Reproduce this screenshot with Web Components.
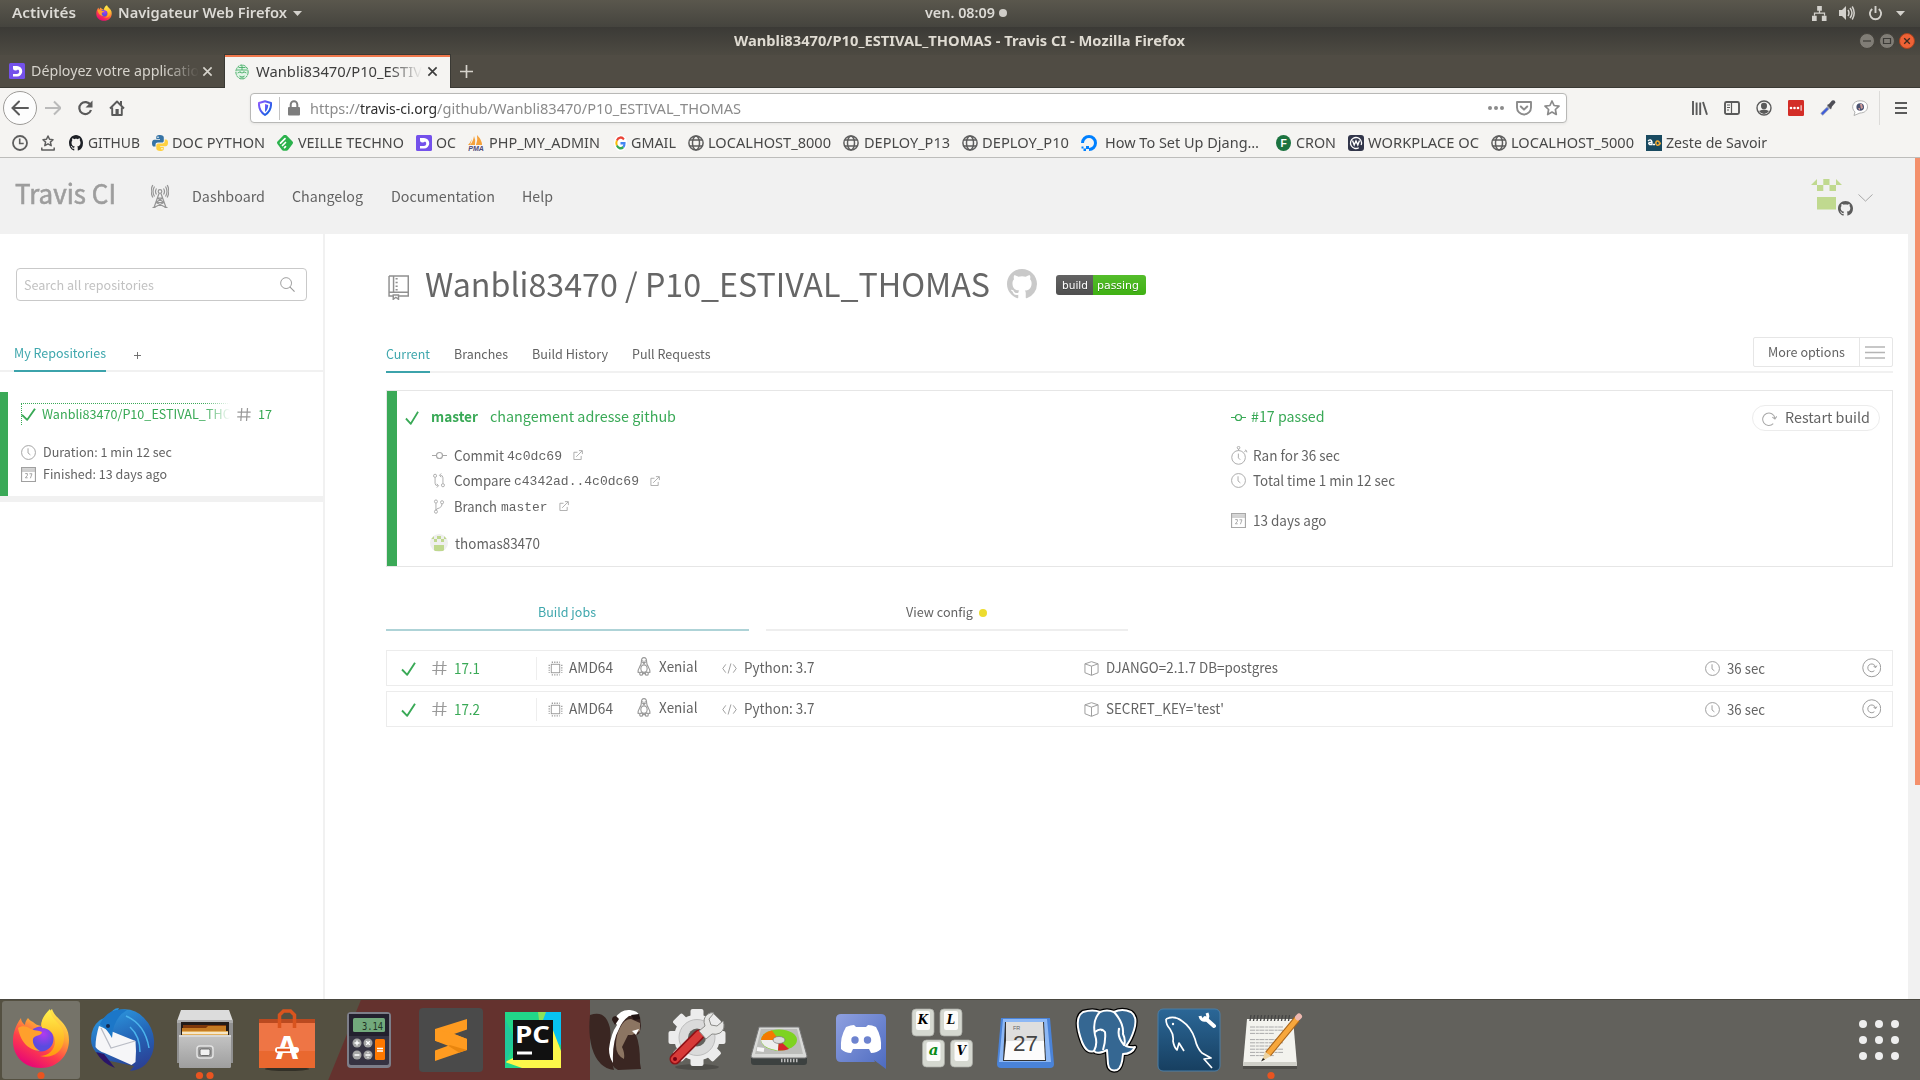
<!DOCTYPE html>
<html lang="fr">
<head>
<meta charset="utf-8">
<title>Travis CI</title>
<style>
html,body{margin:0;padding:0;width:1920px;height:1080px;overflow:hidden;background:#fff}
</style>
</head>
<body>
<desktop-screen></desktop-screen>
<script>
const OCTO='<path d="M8 0C3.58 0 0 3.58 0 8c0 3.54 2.29 6.53 5.47 7.59.4.07.55-.17.55-.38 0-.19-.01-.82-.01-1.49-2.01.37-2.53-.49-2.69-.94-.09-.23-.48-.94-.82-1.13-.28-.15-.68-.52-.01-.53.63-.01 1.08.58 1.23.82.72 1.21 1.87.87 2.33.66.07-.52.28-.87.51-1.07-1.78-.2-3.64-.89-3.64-3.95 0-.87.31-1.59.82-2.15-.08-.2-.36-1.02.08-2.12 0 0 .67-.21 2.2.82.64-.18 1.32-.27 2-.27s1.36.09 2 .27c1.53-1.04 2.2-.82 2.2-.82.44 1.1.16 1.92.08 2.12.51.56.82 1.27.82 2.15 0 3.07-1.87 3.75-3.65 3.95.29.25.54.73.54 1.48 0 1.07-.01 1.93-.01 2.2 0 .21.15.46.55.38A8.01 8.01 0 0016 8c0-4.42-3.58-8-8-8z"/>';
const FOX=`<defs><linearGradient id="fa" x1=".8" y1="0" x2=".25" y2="1"><stop offset="0" stop-color="#fff44f"/><stop offset=".35" stop-color="#ffa436"/><stop offset=".65" stop-color="#ff3f4a"/><stop offset="1" stop-color="#e4007c"/></linearGradient><radialGradient id="fb" cx=".6" cy=".3"><stop offset="0" stop-color="#b13af0"/><stop offset="1" stop-color="#5b4be0"/></radialGradient><linearGradient id="fc" x1="0" y1="0" x2="0" y2="1"><stop offset="0" stop-color="#fff44f"/><stop offset="1" stop-color="#ff980e"/></linearGradient></defs>`;
/* name: [viewBox, markup]; stroke icons inherit currentColor */
const S='fill="none" stroke="currentColor"';
const ICONS={
fox:['12 9 58 61',FOX+`<path fill="url(#fa)" d="M21 19C15 27 13 35 13 42c0 16 12 27 28 27s28-12 28-28c0-11-5-16-9-20-3-3-7-7-8-11-6 5-11 11-11 17-4-1-6-2-8-4-3-1-4-3-5-4-2 2-3 5-3 7-3-2-4-5-4-7z"/><circle cx="41" cy="40" r="12.500" fill="url(#fb)"/><path fill="url(#fc)" d="M50 10c-6 6-10 12-8 19 7 0 13 6 13 13 0 9-7 15-15 15 11 3 23-3 24-17 1-9-4-14-8-18-3-3-6-7-6-12z"/><path fill="#ffa02c" d="M18 29c4-3 9-2 13 1 3 2 8 1 11 3 0 4-8 3-9 7-1 5 3 10 7 12-10-1-19-7-22-23z"/>`],
down:['0 0 8 5','<path fill="#d3d1cc" d="M0 0h8L4 5z"/>'],
net:['0 0 16 16','<g fill="#d3d1cc"><path d="M5.500 0h5v5h-5zM0 10.500h5V16H0zM10.500 10.500h5V16h-5zM2 7h12v3h-1.300V8.300H3.300V10H2zM7.300 4h1.400v4H7.300z"/></g>'],
vol:['0 0 16 16','<path fill="#d3d1cc" d="M0 5h3l4-4v14l-4-4H0z"/><path fill="none" stroke="#d3d1cc" stroke-width="1.500" d="M9 5q2 3 0 6M11 3q4 5 0 10M13.200 1.500q4 6.500 0 13"/>'],
power:['0 0 16 16','<path fill="none" stroke="#d3d1cc" stroke-width="2" d="M4.500 3.200a6 6 0 1 0 7 0M8 0v7.500"/>'],
min:['0 0 16 16','<circle cx="8" cy="8" r="7.500" fill="#807d76" stroke="#45433c"/><path stroke="#3c3b37" stroke-width="1.200" d="M4 8h8"/>'],
max:['0 0 16 16','<circle cx="8" cy="8" r="7.500" fill="#807d76" stroke="#45433c"/><path stroke="#3c3b37" fill="none" stroke-width="1.200" d="M4.500 5.500h7v5h-7z"/>'],
cls:['0 0 16 16','<circle cx="8" cy="8" r="7.500" fill="#ef6236" stroke="#a8431f"/><path stroke="#3c2b20" stroke-width="1.300" d="M5.200 5.200l5.600 5.600M10.800 5.200l-5.600 5.600"/>'],
oc:['0 0 16 16','<rect width="16" height="16" rx="1.500" fill="#7451eb"/><path fill="#fff" d="M4 3h4a5 5 0 0 1 0 10.500H4V11h4a2.400 2.400 0 0 0 1-4.500Q8 7.500 6.500 7.500 4 7.500 4 5z"/>'],
travis:['0 0 16 16','<g fill="none" stroke="#3eaa5f" stroke-width="1"><circle cx="8" cy="8" r="7" fill="#e3f4e8" stroke-dasharray="3 .8"/><path stroke-width=".9" d="M2 6h12M4 3.500h8M3 9q2.500-2 5 0 2.500-2 5 0M5 12q3 2 6 0M8 1v5M5.500 8h1M9.500 8h1M6 14h4"/></g>'],
x:['0 0 12 12','<path '+S+' stroke-width="1.800" d="M1.500 1.500l9 9M10.500 1.500l-9 9"/>'],
plus:['0 0 14 14','<path '+S+' stroke-width="1.800" d="M7 0v14M0 7h14"/>'],
back:['0 0 36 36','<circle cx="18" cy="18" r="16.500" fill="#fdfdfd" stroke="#9d9b98"/><path '+S+' stroke-width="2" d="M26 18H11M17 11.500L10.500 18l6.500 6.500" stroke-linecap="round"/>'],
fwd:['0 0 16 16','<path '+S+' stroke-width="2" d="M0 8h15M9 1.500L15.500 8 9 14.500"/>'],
reload:['0 0 16 16','<path '+S+' stroke-width="2.200" d="M13.500 5a6 6 0 1 0 .5 5"/><path fill="currentColor" d="M15.500.500V7.500h-7z"/>'],
home:['0 0 16 16','<path '+S+' stroke-width="1.900" stroke-linejoin="round" d="M1 8.500L8 1.500l7 7M3.200 7.500V15h9.600V7.500"/><path fill="currentColor" d="M6.500 9h3.200v6H6.500zM11 1h2v4h-2z"/>'],
shield:['0 0 14 16','<defs><linearGradient id="sh" x2="1" y2="1"><stop offset="0" stop-color="#9059ff"/><stop offset="1" stop-color="#0060df"/></linearGradient></defs><path fill="none" stroke="url(#sh)" stroke-width="2" stroke-linejoin="round" d="M7 1.200L13 3q.5 8-6 12Q.5 11 1 3z"/><path fill="url(#sh)" d="M7 4l3.200 1q0 4.500-3.200 7z"/>'],
lock:['0 0 14 16','<rect x="1" y="7" width="12" height="8.500" rx="1" fill="#7d7d7d"/><path fill="none" stroke="#7d7d7d" stroke-width="2" d="M3.700 8V4.500a3.300 3.300 0 0 1 6.600 0V8"/>'],
dots:['0 0 16 16','<g fill="currentColor"><circle cx="2" cy="8" r="2"/><circle cx="8" cy="8" r="2"/><circle cx="14" cy="8" r="2"/></g>'],
pocket:['0 0 16 16','<path '+S+' stroke-width="1.900" stroke-linejoin="round" d="M1 2h14v5.500a7 7 0 0 1-14 0z"/><path '+S+' stroke-width="2" stroke-linecap="round" stroke-linejoin="round" d="M4.800 6.500L8 9.600l3.200-3.100"/>'],
star:['0 0 16 16','<path '+S+' stroke-width="1.700" stroke-linejoin="round" d="M8 1l2.100 4.500 4.900.6-3.600 3.400.9 5L8 12.100 3.700 14.500l.9-5L1 6.100l4.900-.6z"/>'],
lib:['0 0 16 16','<path '+S+' stroke-width="1.900" d="M1 1v14M4.600 2.500V15M8.200 2.500V15M11 2l4 12.800"/>'],
side:['0 0 16 16','<rect x="1" y="2" width="14" height="12" rx="1.500" '+S+' stroke-width="1.900"/><path '+S+' stroke-width="1.200" d="M7.500 2v12M3 5h3M3 7.500h3M3 10h2"/>'],
acct:['0 0 16 16','<circle cx="8" cy="8" r="7" '+S+' stroke-width="1.400"/><path fill="currentColor" d="M8 2.700a3 3 0 0 1 3 3.200C11 8 9.800 9.300 8 9.300S5 8 5 5.900a3 3 0 0 1 3-3.200M3 11q5-2.500 10 0-2 3-5 3t-5-3"/>'],
lp:['0 0 16 16','<rect width="16" height="16" rx="1.200" fill="#d32d27"/><g fill="#fff"><circle cx="3" cy="8" r="1.300"/><circle cx="6.500" cy="8" r="1.300"/><circle cx="10" cy="8" r="1.300"/><path d="M12.600 5.200h1v5.600h-1z"/></g>'],
drop:['0 0 16 16','<path stroke="#9aa0b5" stroke-width="3.400" d="M1.500 14.500l7.500-7.500"/><path stroke="#3b5bdd" stroke-width="2" stroke-linecap="round" d="M2.500 13.500l4.500-4.500"/><path fill="#4e4e56" d="M7 5l2-1 3-3.500q3-1 3.500 2L12 6.500l-1 3z"/>'],
bub:['0 0 16 16','<path fill="#fff" stroke="#a9a9a9" stroke-width=".9" d="M8 .8c5 0 7.500 2.500 7.500 6S12.500 13 8 13L2 15.500 3 12C-1.500 8 .5.800 8 .8z"/><circle cx="8.200" cy="7" r="3.800" fill="#4a5270"/><path fill="#c99" d="M8 4h2l1 4-2 1zM6 8h2v3z"/>'],
burger:['0 0 12 14','<path '+S+' stroke-width="2" d="M0 2h12M0 7h12M0 12h12"/>'],
hist:['0 0 16 16','<circle cx="8" cy="8" r="7" '+S+' stroke-width="1.800"/><path '+S+' stroke-width="1.600" d="M7.700 3.500v5h4"/>'],
most:['0 0 14 16','<path '+S+' stroke-width="1.500" stroke-linejoin="round" d="M7 1l1.500 3.300 3.500.4-2.600 2.400.8 3.600L7 8.900l-3.200 1.800.8-3.600L2 4.700l3.500-.4zM.8 12.500v2.600h12.400v-2.600"/>'],
octo:['0 0 16 16','<g fill="currentColor">'+OCTO+'</g>'],
py:['0 0 16 16','<path fill="#3673a5" d="M8 0C4.500 0 4.300 1.200 4.300 2.500V4H8v.8H2.300C.8 4.800 0 6 0 8.200s.8 3.400 2 3.400h1.500V9.800c0-1.300 1-2.200 2.300-2.200H10c1 0 1.800-.8 1.800-1.900V2.500C11.800 1 10.500 0 8 0z"/><path fill="#ffd140" d="M8.300 16c3.400 0 3.500-1.200 3.500-2.500V12H8.200v-.8h5.500c1.500 0 2.300-1.200 2.300-3.400s-.8-3.300-2-3.300h-1.300v1.800c0 1.300-1 2.200-2.300 2.200H6.200c-1 0-1.900.8-1.900 1.900v3.100c0 1.500 1.500 2.500 4 2.500z"/><circle cx="6" cy="2.300" r=".8" fill="#fff"/><circle cx="10" cy="13.700" r=".8" fill="#fff"/>'],
feed:['0 0 16 16','<path fill="#2bb24c" d="M8-.2q1 0 1.700.8l5.800 6q1 1.200 0 2.400L11 15q-.6.800-1.600.8H6.600Q5.600 15.800 5 15L.5 9q-1-1.200 0-2.400l5.800-6Q7-.2 8-.2z"/><path stroke="#fff" stroke-width="1.700" fill="none" stroke-linecap="round" d="M3.500 8.200L8 3.700M5.500 10.500l3-3M7.500 12.700l1-1"/>'],
pma:['0 0 16 16','<path fill="#f5a13a" d="M6 1q2 4 1 9H2q3-3 4-9M9 0q5 5 5 10H8q2-5 1-10M4 4q-2 4-4 6h2z"/><text x="8" y="15.800" font-family="Liberation Sans" font-style="italic" font-weight="700" font-size="7" text-anchor="middle" fill="#4d4a78">PMA</text>'],
goog:['0 0 16 16','<circle cx="8" cy="8" r="8" fill="#fff"/><g fill="none" stroke-width="2.500"><path stroke="#ea4335" d="M12.200 4.500A5.200 5.200 0 0 0 3.500 5.500"/><path stroke="#fbbc05" d="M3.500 5.500a5.200 5.200 0 0 0 0 5"/><path stroke="#34a853" d="M3.500 10.500a5.200 5.200 0 0 0 8 1.500"/><path stroke="#4285f4" d="M11.500 12A5 5 0 0 0 13 8.200H8"/></g>'],
globe:['0 0 16 16','<g '+S+' stroke-width="1.500"><circle cx="8" cy="8" r="7.100"/><ellipse cx="8" cy="8" rx="3.500" ry="7"/><path d="M2 5h12M2 11h12"/></g>'],
doc:['0 0 16 16','<path fill="none" stroke="#0080ff" stroke-width="3" d="M1.500 8A6.500 6.500 0 1 1 8 14.500"/><path fill="#0080ff" d="M5 11h3v3H5zM2.500 13.500H5V16H2.500zM.5 11.500h2v2h-2z"/>'],
fcron:['0 0 16 16','<circle cx="8" cy="8" r="8" fill="#1c7340"/><text x="8.200" y="12" font-family="Liberation Sans" font-weight="700" font-size="11" text-anchor="middle" fill="#fff">F</text>'],
work:['0 0 16 16','<rect width="16" height="16" rx="3" fill="#32364a"/><circle cx="8" cy="8" r="5.500" fill="none" stroke="#fff" stroke-width="1.300" stroke-dasharray="30 4" transform="rotate(60 8 8)"/><path fill="none" stroke="#fff" stroke-width="1.400" d="M4.500 5.500L6.200 10 8 6l1.800 4 1.700-4.500"/>'],
zeste:['0 0 16 16','<rect width="16" height="16" fill="#194a60"/><path fill="none" stroke="#fff" stroke-width="1.300" d="M2 6q3-2.500 4 1v2.500H3.500Q1.500 8 4 7.500h2M7 9.500h2"/><path fill="none" stroke="#f8ad32" stroke-width="1.500" d="M13.500 7q-3-2.500-3.700 1 .4 3.500 3.700 1.500 2-2-1-1.800"/>'],
tower:['0 0 18 24','<g '+S+' stroke-width="1.200"><circle cx="9" cy="7.500" r="1.800"/><path d="M8 9.500L3 23.500M10 9.500l5 14M6.500 14h5M5 18.500h8M6.500 14l6.500 4.500M11.500 14L5 18.500M5 18.500l9 4.500M13 18.500L4 23M1.500 23.500h3M13.500 23.500h3M5.500 4.500q-2 3 0 6M12.500 4.500q2 3 0 6M3.500 2.500q-3 5 0 10M14.500 2.500q3 5 0 10M1.800 1Q-1.500 7 1.800 13.500M16.200 1q3.300 6 0 12.500"/></g>'],
chev:['0 0 16 9','<path '+S+' d="M.5.500L8 8l7.500-7.500"/>'],
search:['0 0 16 16','<circle cx="6.500" cy="6.500" r="5.800" '+S+'/><path '+S+' stroke-width="1.200" d="M10.500 10.500l5 5"/>'],
check:['0 0 15 14','<path '+S+' stroke-width="1.900" stroke-linejoin="round" d="M1 7.500l5.200 5.300L14 .8"/>'],
hash:['0 0 14 14','<path '+S+' stroke-width="1.200" d="M4.800 0L3.800 14M10.500 0l-1 14M.5 4.500h13.200M.2 9.500h13.200"/>'],
clock:['0 0 16 16','<circle cx="8" cy="8" r="7.400" '+S+'/><path '+S+' d="M7.500 3.500V8.500l2.500 2"/>'],
cal:['0 0 16 16','<path '+S+' stroke-width="1.200" d="M.6.600h14.800v14.800H.6zM.6 4.200h14.800"/><path '+S+' stroke-width=".8" d="M1 2.300h14"/><path '+S+' d="M4.500 7h2.300v2L4.600 11.500h2.500M9 7.200h2.700L10 12"/>'],
book:['0 0 20 25','<g '+S+' stroke-width="1.400"><path d="M1 1h18.300v20H10.500M5 21H1V1M1 17.300h18.300M5.300 1v16.300"/><path stroke-width="2" stroke-dasharray="1.500 2.200" d="M8.200 3v13"/><path d="M5 20h5v4.300l-2.500-2-2.500 2z"/></g>'],
commit:['0 0 16 16','<g '+S+' stroke-width="1.300"><circle cx="8" cy="8" r="3.200"/><path d="M0 8h4.500M11.500 8H16"/></g>'],
compare:['0 0 16 16','<g '+S+'><circle cx="3.500" cy="3" r="1.700"/><circle cx="12.500" cy="13" r="1.700"/><path d="M3.500 5v6q0 2.500 3 2.500M5.500 11.500l2 2-2 2M12.500 11V5q0-2.500-3-2.500M10.500.500l-2 2 2 2"/></g>'],
branch:['0 0 16 16','<g '+S+'><circle cx="4.500" cy="2.700" r="1.700"/><circle cx="4.500" cy="13.500" r="1.700"/><circle cx="11.500" cy="3.500" r="1.700"/><path d="M4.500 4.500v7.200M11.500 5.300q0 3-3 4.200-4 1-4 2.500"/></g>'],
ext:['0 0 11 11','<path '+S+' d="M5 2.500H1v8h8V6.500M3.500 7.500L10 1M6.500.700h3.800v3.800"/>'],
pix:['0 0 18 18','<clipPath id="pc"><circle cx="9" cy="9" r="9"/></clipPath><g clip-path="url(#pc)"><rect width="18" height="18" fill="#efefef"/><path fill="#bfd88e" d="M1 5l3-3v3zM7 2h4v3H7zM14 2l3 3h-3zM4 5h3v3H4zM11 5h3v3h-3zM4 11h10v6H4z"/></g>'],
avatar:['0 0 31 31','<path fill="#c0d98f" d="M0 6l6-6v6zM12.300 0h6.200v6h-6.200zM25 0l6 6h-6zM6 6h6.300v6H6zM18.500 6H25v6h-6.500zM6 18h19v12.500H6z"/>'],
watch:['0 0 18 20','<g '+S+'><circle cx="8" cy="12" r="7.200"/><circle cx="8" cy="1.800" r="1.400"/><path d="M8 3.200v1.600M7.800 8v4.500l2 2M14 6.500l1.500-1.500M14.800 4.200q2 0 2 2.500"/></g>'],
restart:['0 0 16 16','<path '+S+' stroke-width="1.100" d="M12 13.500A6.600 6.600 0 1 1 13.800 7.500M11 6.500l2.800 2 2-2.800"/>'],
again:['0 0 20 20','<circle cx="10" cy="10" r="9.200" '+S+'/><path '+S+' d="M12.700 13a4 4 0 1 1 1.200-3.500M11.800 8.500l2.200 1.300 1.200-2"/>'],
lines:['0 0 20 13','<path stroke="#b5b5b5" stroke-width="1.500" d="M0 1h20M0 6.500h20M0 12h20"/>'],
chip:['0 0 16 16','<g '+S+' stroke-width="1.200"><rect x="3.500" y="3.500" width="9" height="9" stroke-width="1"/><path stroke-width="1.400" stroke-dasharray="1.300 1.300" d="M4 1.300h8.500M4 14.700h8.500M1.300 4v8.500M14.700 4v8.500"/></g>'],
tux:['0 0 16 20','<g '+S+' stroke-width="1.300"><path d="M5 5q0-4.300 3-4.300T11 5q0 3 2 5.500 2 3 1.800 5.500l-2 .5M5 5q0 3-2 5.500Q1 13.500 1.200 16l2 .5"/><ellipse cx="8" cy="12.200" rx="3.600" ry="4"/><circle cx="4.800" cy="17.500" r="1.700"/><circle cx="11.200" cy="17.500" r="1.700"/><path d="M6.500 17.500h3M6.500 5.500L8 7l1.500-1.500zM6.500 3.300v1M9.500 3.300v1"/></g>'],
code:['0 0 16 12','<path '+S+' d="M4 1.500L.8 6 4 10.500M12 1.500L15.200 6 12 10.500M9.500.500l-3 11"/>'],
box:['0 0 16 16','<path '+S+' stroke-linejoin="round" d="M8 .7l7 2.300v9.500l-7 2.800-7-2.800V3zM1 3l7 2.500L15 3M8 5.500v9.500"/>'],
};
const BASE=`:host{box-sizing:border-box}*{box-sizing:border-box}.r{display:flex;align-items:center}.c{display:flex;flex-direction:column}`;
const U='"Noto Sans","Open Sans",sans-serif', P='"Noto Sans CJK SC","Noto Sans",sans-serif';
function def(name,css,html){
  customElements.define(name,class extends HTMLElement{
    connectedCallback(){
      if(this.shadowRoot)return;
      this.attachShadow({mode:'open'}).innerHTML='<style>'+BASE+css+'</style>'+(typeof html==='function'?html(this):html);
    }
  });
}
/* x-text: one line of text set to the width w, with a gap g before it and an optional fade-out at its end */
class XText extends HTMLElement{
  connectedCallback(){
    if(this.shadowRoot)return;
    const w=+this.getAttribute('w'),g=+this.getAttribute('g')||0,f=+this.getAttribute('fade')||0;
    this.attachShadow({mode:'open'}).innerHTML=`<style>:host{display:block;flex:none;line-height:${f?1.5:1};white-space:pre;width:${w}px;margin-left:${g}px;${f?`-webkit-mask-image:linear-gradient(90deg,#000 ${w-f}px,transparent)`:''}}span{display:inline-block;transform-origin:0 50%;vertical-align:top}</style><span><slot></slot></span>`;
    const s=this.shadowRoot.querySelector('span'),n=s.getBoundingClientRect().width;
    if(n)s.style.transform=`scaleX(${w/n})`;
  }
}
customElements.define('x-text',XText);
class XIcon extends HTMLElement{
  connectedCallback(){
    if(this.shadowRoot)return;
    const w=this.getAttribute('w')||16,h=this.getAttribute('h')||w,g=this.getAttribute('g')||0,d=ICONS[this.getAttribute('n')];
    this.attachShadow({mode:'open'}).innerHTML=`<style>:host{display:block;flex:none;width:${w}px;height:${h}px;margin-left:${g}px}svg{display:block}</style><svg width="${w}" height="${h}" viewBox="${d[0]}" preserveAspectRatio="none">${d[1]}</svg>`;
  }
}
customElements.define('x-icon',XIcon);
const T=(g,w,t,s='',f='')=>`<x-text g="${g}" w="${w}" style="${s}"${f?` fade="${f}"`:''}>${t}</x-text>`;
const I=(g,n,w=16,h=w,s='')=>`<x-icon g="${g}" n="${n}" w="${w}" h="${h}" style="${s}"></x-icon>`;

def('gnome-bar',`:host{display:grid;grid-template-columns:925px 1fr auto;align-items:center;height:27px;flex:none;background:linear-gradient(#5a574d,#45443e);font:600 14px ${U};color:#dcdad5;padding-bottom:1px}.dot{width:8px;height:8px;border-radius:50%;background:#cfcdc8;margin-left:4px}`,
`<div class="r">${T(12,64,'Activités')}${I(20,'fox',16)}${T(6,169,'Navigateur Web Firefox')}${I(6,'down',9,5)}</div><div class="r">${T(0,70,'ven. 08:09')}<div class="dot"></div></div><div class="r" style="padding-right:15px">${I(0,'net',15,15)}${I(12,'vol',16)}${I(13,'power',15,15)}${I(13,'down',9,5)}</div>`);

def('window-title',`:host{display:grid;grid-template-columns:733.5px 1fr auto;align-items:center;height:28px;flex:none;background:linear-gradient(#3b3a36,#4d4a42);font:700 14px ${U};color:#dfdbd2}`,
`<span></span>${T(0,451,'Wanbli83470/P10_ESTIVAL_THOMAS - Travis CI - Mozilla Firefox')}<div class="r" style="padding-right:5px">${I(0,'min')}${I(4,'max')}${I(4,'cls')}</div>`);

def('browser-tab',`:host{display:flex;align-items:center;width:225px;height:32px;padding-left:9px;color:#d6d3cc;flex:none}:host([active]){background:#f5f4f2;color:#3d3d3d;height:33px;border-top:2px solid #f0774b;padding:0 0 2px 10px;outline:1px solid #3a3934;clip-path:inset(-1px -1px 0 -1px)}`,`<slot></slot>`);
def('tab-strip',`:host{display:flex;align-items:flex-start;height:33px;flex:none;background:#504c44;box-shadow:inset 0 -1px #3a3934;font:14.5px ${U}}`,
`<browser-tab>${I(0,'oc')}${T(6,168,'Déployez votre applicatio','','34')}${I(3,'x',11,11)}</browser-tab><browser-tab active>${I(0,'travis',14,16)}${T(7,166,'Wanbli83470/P10_ESTIV','','32')}${I(5,'x',11,11)}</browser-tab><div class="r" style="height:32px;color:#d6d3cc">${I(10,'plus',13,13)}</div>`);

def('nav-toolbar',`:host{display:flex;align-items:center;height:40px;flex:none;background:#f5f4f2;color:#5a5a5a;font:14.500px ${U}}.url{display:flex;align-items:center;width:1317px;height:30px;margin-left:125px;background:#fff;border:1px solid #b8b8b6;border-radius:4px;color:#8b8b8b;box-shadow:0 1px 3px #0001}.sep{width:1px;height:23px;background:#c4c4c4}`,
`${I(2,'back',36)}${I(7,'fwd',16,16,'color:#bababa')}${I(16,'reload')}${I(16,'home')}<div class="url">${I(7,'shield',14,16)}<div class="sep" style="margin-left:7px"></div>${I(7,'lock',14,16)}${T(9,50,'https://')}${T(0,77,'travis-ci.org','color:#2d2d2d')}${T(0,304,'/github/Wanbli83470/P10_ESTIVAL_THOMAS')}<span style="flex:1"></span>${I(0,'dots')}${I(12,'pocket')}${I(12,'star')}<span style="width:6px"></span></div>${I(125,'lib')}${I(16,'side')}${I(16,'acct')}${I(16,'lp')}${I(16,'drop')}${I(16,'bub')}<div class="sep" style="margin-left:11px;height:34px;background:#dcdbd9"></div>${I(15,'burger',12,14)}`);

def('bookmark-item',`:host{display:flex;align-items:center}`,`<slot></slot>`);
const B=(g,n,t,w,iw=16,tg=4)=>`<bookmark-item>${I(g,n,iw,16,n==='octo'?'color:#1d2026':'')}${T(tg,w,t)}</bookmark-item>`;
def('bookmarks-bar',`:host{display:flex;align-items:center;height:30px;flex:none;background:#f5f4f2;border-bottom:1px solid #bdbdbb;color:#5e5e5e;font:14.500px ${U}}x-text{color:#484848}`,
I(12,'hist')+I(13,'most',14,16)+B(14,'octo','GITHUB',52,14,5)+B(12,'py','DOC PYTHON',93)+B(12,'feed','VEILLE TECHNO',106,16,5)+B(12,'oc','OC',20)+B(12,'pma','PHP_MY_ADMIN',111,16,5)+B(14,'goog','GMAIL',45,13,4)+B(12,'globe','LOCALHOST_8000',123)+B(12,'globe','DEPLOY_P13',86,16,5)+B(12,'globe','DEPLOY_P10',87)+B(12,'doc','How To Set Up Djang…',154,16,8)+B(17,'fcron','CRON',40,15,5)+B(12,'work','WORKPLACE OC',111)+B(12,'globe','LOCALHOST_5000',123)+B(12,'zeste','Zeste de Savoir',101,16,4));

def('site-header',`:host{display:flex;height:76px;flex:none;background:#f1f1f1;color:#636363;font:14.300px ${P};width:1908px;justify-content:space-between}`,
`<div class="r">${T(15,101,'Travis CI','font-size:27px;color:#9d9d9d;-webkit-text-stroke:.6px #9d9d9d;margin-top:-8px')}${I(35,'tower',18,24,'color:#959595')}${T(23,73,'Dashboard')}${T(27,71,'Changelog')}${T(28,104,'Documentation')}${T(27,31,'Help')}</div><div class="r" style="padding-right:35px">${I(0,'avatar',31,31,'margin-top:-3px')}${I(-4,'octo',15,15,'color:#5c5c5c;margin-top:25px')}${I(5,'chev',15,8,'color:#a0a0a0;margin-top:4px')}</div>`);

def('repo-sidebar',`:host{display:flex;flex-direction:column;width:325px;flex:none;border-right:2px solid #f1f1f1;font:12.500px ${P};color:#636363;padding-top:34px}
.s{display:flex;align-items:center;margin:0 0 0 16px;width:291px;height:33px;border:1px solid #c9c9c9;border-radius:4px;color:#c2c2c2}
.tabs{display:flex;align-items:stretch;height:35px;margin-top:36px;border-bottom:2px solid #f1f1f1;padding-left:14px}
.on{display:flex;align-items:center;color:#3fa7ad;border-bottom:2px solid #3ca3ab;margin-bottom:-2px}
.card{margin-top:20px;height:110px;background:linear-gradient(90deg,#3aa957 8px,transparent 8px) 0 0/100% 104px no-repeat;border-bottom:6px solid #f1f1f1;padding:11px 0 0 21px}
.nm{height:22px;color:#39a956}.lk{display:flex;align-items:center;width:209px;height:22px;border-top:1px dotted #39a956;border-left:1px dotted #39a956;-webkit-mask-image:linear-gradient(90deg,#000 183px,transparent)}`,
`<div class="s">${T(7,130,'Search all repositories','margin-top:1px')}<span style="flex:1"></span>${I(0,'search',15,15,'color:#999')}<span style="width:11px"></span></div>
<div class="tabs"><div class="on">${T(0,92,'My Repositories')}</div><div class="r">${I(28,'plus',7,7,'margin-top:4px')}</div></div>
<div class="card"><div class="r nm"><div class="lk">${I(-1,'check',15,13)}${T(6,190,'Wanbli83470/P10_ESTIVAL_THO')}</div>${I(7,'hash',14,13,'color:#999')}${T(7,14,'17')}</div>
<div class="r" style="height:22px;margin-top:16px">${I(0,'clock',15,15,'color:#a0a0a0')}${T(7,129,'Duration: 1 min 12 sec')}</div><div class="r" style="height:22px">${I(0,'cal',15,15,'color:#a0a0a0')}${T(7,124,'Finished: 13 days ago')}</div></div>`);

def('status-badge',`:host{display:flex;align-items:center;width:90px;height:20px;border-radius:3px;overflow:hidden;margin-left:19px;font:11px "DejaVu Sans",Verdana,sans-serif;color:#fff;text-shadow:0 1px #0104;background:linear-gradient(#bbb2,#0001),linear-gradient(90deg,#555 37px,#44bd15 37px)}`,`${T(6,26,'build')}${T(9,42,'passing')}`);

def('repo-heading',`:host{display:flex;align-items:center;height:102px;flex:none;color:#666;font:32.500px ${P}}`,
`${I(2,'book',21,25,'color:#909090;margin-top:5px')}${T(16,565,'Wanbli83470 / P10_ESTIVAL_THOMAS','margin-top:-4px')}${I(17,'octo',30,30,'color:#c9c9c9;margin-top:-2px')}<status-badge></status-badge>`);

def('repo-tabs',`:host{display:flex;height:37px;flex:none;border-bottom:2px solid #f1f1f1;font:12.500px ${P};color:#636363}.on{display:flex;align-items:center;color:#3fa7ad;border-bottom:2px solid #3ca3ab;margin-bottom:-2px;padding-top:2px}.p{padding-top:2px}.more{display:flex;align-items:center;margin:1px 0 0 auto;width:140px;height:30px;border:1px solid #e6e6e6;border-radius:2px}.v{height:28px;width:1px;background:#e6e6e6;margin-left:14px}`,
`<div class="on">${T(0,44,'Current')}</div><div class="r p">${T(24,54,'Branches')}${T(24,76,'Build History')}${T(23.500,78.500,'Pull Requests')}</div><div class="more">${T(14,77,'More options')}<div class="v"></div>${I(5,'lines',20,13)}</div>`);

const MONO='font:13px Liberation Mono,monospace;line-height:1;margin-top:2px';
def('build-card',`:host{display:flex;height:177px;flex:none;margin-top:17px;border:1px solid #e6e6e6;font:14.300px ${P};color:#636363}.bar{width:10px;background:#3aa957;flex:none}.l{width:834px}.h{height:51px;color:#39a956}.i{height:26px}x-icon{color:#a8a8a8}.h x-icon{color:inherit}.btn{display:flex;align-items:center;width:128px;height:26px;margin:14px 12px 0 auto;border:1px solid #ececec;border-radius:13px}.btn x-text{margin-top:-1px}`,
`<div class="bar"></div><div class="l c"><div class="r h">${I(7.500,'check',14,14,'margin-top:2px')}${T(12.500,47,'master','font-weight:700')}${T(11.500,186,'changement adresse github')}</div>
<div class="r i">${I(35,'commit',15)}${T(7,50,'Commit')}${T(3,55,'4c0dc69',MONO)}${I(11,'ext',10,10)}</div>
<div class="r i" style="height:25px">${I(35,'compare',14,15)}${T(8,57,'Compare')}${T(3,125,'c4342ad..4c0dc69',MONO)}${I(11,'ext',10,10)}</div>
<div class="r i">${I(35,'branch',14,15)}${T(8,43,'Branch')}${T(4,46.500,'master',MONO)}${I(11,'ext',10,10)}</div>
<div class="r i" style="margin-top:11px">${I(33,'pix',18)}${T(7,85,'thomas83470')}</div></div>
<div class="c"><div class="r h">${I(0,'commit',15,15,'margin-top:2px')}${T(4.500,73.500,'#17 passed')}</div>
<div class="r i">${I(0,'watch',17,19)}${T(4.500,87,'Ran for 36 sec')}</div><div class="r i" style="height:25px">${I(0,'clock',15)}${T(6.500,142,'Total time 1 min 12 sec')}</div><div class="r i" style="margin-top:14px">${I(0,'cal',15,15)}${T(6.500,73.500,'13 days ago')}</div></div>
<div class="btn">${I(9,'restart',15,15)}${T(7.500,85,'Restart build')}</div>`);

def('job-tabs',`:host{display:flex;gap:17px;height:64px;flex:none;font:12.500px ${P};color:#636363}.t{width:362.500px;display:flex;align-items:center;justify-content:center;padding:29px 1px 0 0;border-bottom:2px solid #eee}.on{color:#3fa7ad;border-color:#aed3d7}i{width:8px;height:8px;border-radius:50%;background:#eddc2f;margin-left:6px}`,
`<div class="t on">${T(0,58,'Build jobs')}</div><div class="t">${T(0,67,'View config')}<i></i></div>`);

def('job-row',`:host{display:flex;align-items:center;height:36px;flex:none;margin-bottom:5px;border:1px solid #ececec;font:14.300px ${P};color:#636363}.v{width:1px;height:23px;background:#eee;margin-left:56px}x-icon{color:#999}`,
e=>`${I(14,'check',15,14,'color:#39a956;margin-top:1px')}${I(16,'hash',15,14)}${T(7,26,e.getAttribute('no'),'color:#39a956')}<div class="v"></div>${I(10.500,'chip',15,15)}${T(6,44,'AMD64','margin-top:-1px')}${I(24.500,'tux',14,19,'margin-top:-3px')}${T(8,38.500,'Xenial','margin-top:-3px')}${I(24.500,'code',15,11)}${T(6.500,70.500,'Python: 3.7','margin-top:-1px')}${I(270,'box',15,15)}${T(7,e.getAttribute('ew'),e.getAttribute('env'),'margin-top:-1px')}<span style="flex:1"></span>${I(0,'clock',15,15,'margin-top:1px')}${T(7,38,'36 sec','margin-top:1px')}${I(96.500,'again',19.500,19.500)}<span style="width:11px"></span>`);

def('repo-page',`:host{display:flex;flex-direction:column;width:1583px;padding:0 15px 0 61px;background:#fff}`,
`<repo-heading></repo-heading><repo-tabs></repo-tabs><build-card></build-card><job-tabs></job-tabs><div style="height:19px"></div><job-row no="17.1" env="DJANGO=2.1.7 DB=postgres" ew="172"></job-row><job-row no="17.2" env="SECRET_KEY='test'" ew="118"></job-row>`);

def('scroll-bar',`:host{display:flex;justify-content:flex-end;width:12px;background:#f1f1f1}div{width:5px;height:627px;background:#f4906c}`,`<div></div>`);

const key=(x,y,c,col)=>`<rect x="${x}" y="${y}" width="22" height="27" rx="4" fill="#d5d8d0" stroke="#a9aba5" stroke-width=".7"/><rect x="${x+4}" y="${y+2}" width="14" height="19" rx="2" fill="#fcfcfa"/><text x="${x+11}" y="${y+14.5}" font-family="DejaVu Serif" font-style="italic" font-weight="700" font-size="${c==='a'?15:12}" text-anchor="middle" fill="${col}">${c}</text>`;
const gear=[...Array(8)].map((_,i)=>`<rect x="34.500" y="10" width="13" height="14" rx="2" transform="rotate(${i*45} 41 38.500)"/>`).join('');
const spir=[...Array(12)].map((_,i)=>`<path d="M${20+i*3.500} 22l1-6" stroke="#444" stroke-width="1.300"/>`).join('');
const para=[...Array(9)].map((_,i)=>`<path d="M20 ${28+i*3.200+(i>2?3:0)}h${i%3===2?24:33}" stroke="#aaa" stroke-width="1" stroke-dasharray="5 .8 3 .6"/>`).join('');
const DOCK=[
`<rect x="2" y="2" width="78" height="78" rx="3" fill="#757369"/>`+ICONS.fox[1]+`<circle cx="41" cy="76.500" r="3.600" fill="#e95420"/>`,
`<defs><linearGradient id="tb" x1=".3" x2=".7" y2="1"><stop offset="0" stop-color="#2d9ae0"/><stop offset=".5" stop-color="#2466b8"/><stop offset="1" stop-color="#2b3f94"/></linearGradient></defs><path fill="url(#tb)" d="M27 18Q30 9 37 9l-1 2q16-3 26 8 9 9 10 22 1 14-8 24-6 6-16 7l4-5-24-5Q9 55 9 40q0-12 9-19l6-3z"/><path fill="#f6f6f8" d="M17 27Q26 31 53.500 42q1 10 0 21l-4 3-27-12q-6-2-9-6 0-10 3.500-21z"/><path fill="none" stroke="#b9bcc5" stroke-width="1.300" d="M19 29l10 20 24-7"/><path fill="#2a1468" d="M14 53q6 11 19 16l-11-14z"/><path fill="#1c77c8" d="M18 25q8-17 27-14-14 8-15 28-5-9-12-14z"/><circle cx="26" cy="27" r="2" fill="#172b50"/><path fill="none" stroke="#4bb3ec" stroke-width="1.500" d="M44 17q19 8 23 32M48 28q10 9 10 25"/>`,
`<defs><linearGradient id="fl" x2="0" y2="1"><stop offset="0" stop-color="#c4c4c4"/><stop offset="1" stop-color="#9e9e9e"/></linearGradient></defs><path fill="#909090" d="M13 22h56v42H13z"/><path fill="#dcdcdc" d="M17 11h48l4 11H13z"/><path fill="#ababab" d="M13 21h56v3H13z"/><path fill="#221b18" d="M17 23h48v15H17z"/><path fill="#7e380a" d="M19 26h43v10H19z"/><path fill="#c47a22" d="M18 29h24l2-2h18v9H18z"/><path fill="#e3b05d" d="M18 32h46v4H18z"/><path fill="#f5e6c8" d="M18 33h46v2H18z"/><rect x="15" y="36" width="52" height="33" rx="1.500" fill="url(#fl)"/><path fill="#d8d8d8" d="M15 36h52v2H15z"/><rect x="33" y="47" width="16" height="12" rx="3" fill="#999" stroke="#e4e4e4" stroke-width="1.500"/><rect x="36" y="50" width="10" height="6.500" rx="1.500" fill="#f1f1f1" stroke="#555" stroke-width=".8"/><circle cx="35.500" cy="76.500" r="3.600" fill="#e95420"/><circle cx="46" cy="76.500" r="3.600" fill="#e95420"/>`,
`<ellipse cx="41" cy="70" rx="22" ry="2" fill="#0006"/><path fill="#ba4a20" d="M13 20h56v6H13z"/><path fill="#ee7545" d="M13 24h56v45H13z"/><path fill="#e9682f" d="M13 52h56v17H13z"/><path fill="none" stroke="#d9541e" stroke-width="3.500" d="M33.500 29V16l4-4h7l4 4v13"/><text x="41" y="60" font-family="Open Sans" font-weight="700" font-size="32" text-anchor="middle" fill="#fff">A</text><rect x="29" y="48" width="24" height="6" rx="3" fill="#fff"/><path stroke="#e2571e" stroke-width="2.600" d="M31 51h13"/>`,
`<rect x="19" y="13" width="44" height="56" rx="4" fill="#7d7e89"/><rect x="21" y="15" width="40" height="51" rx="2" fill="#363342"/><rect x="21" y="15" width="40" height="22" fill="#23202e"/><rect x="25" y="19" width="32" height="14" rx="1.500" fill="#72a97c"/><text x="55" y="30.500" font-family="DejaVu Sans Mono" font-size="11" text-anchor="end" textLength="21" lengthAdjust="spacingAndGlyphs" fill="#1f3426">3.14</text><g fill="#a5a5a5"><circle cx="29" cy="44" r="4.500"/><circle cx="40" cy="44" r="4.500"/><circle cx="29" cy="56" r="4.500"/><circle cx="40" cy="56" r="4.500"/></g><rect x="47" y="40" width="10" height="21" rx="1.500" fill="#ff7800"/><path fill="none" stroke="#fff" stroke-width="1.400" d="M26.500 44h5M29 41.500v5M38.200 42.200l3.600 3.600M41.800 42.200l-3.600 3.600M26.500 56h5M37.500 56h5M49 49.500h6M49 52h6M40 53.300v1M40 57.700v1"/>`,
`<rect x="9" y="9" width="64" height="64" rx="4" fill="#4a4a4a"/><path fill="#ff9b20" d="M25 30l32-10v10.500L44 35l13 5v11L25 62V51.500l13-4.800-13-5z"/><path fill="#e9860f" d="M38 46.700l19-7v11.300l-8 2.500z"/><path fill="#ff9b20" d="M25 30l19 5 13 5v11L25 41.700z"/>`,
`<rect x="13" y="13" width="56" height="56" fill="#21d789"/><path fill="#07c3f2" d="M50 13h19v33L52 35z"/><path fill="#8de35a" d="M46 13h8l-6 16z"/><path fill="#fcf84a" d="M13 63l8-4 38-33 10 26v17H30z"/><path fill="#1fc99b" d="M13 20l10 20-10 26z"/><rect x="21" y="21" width="40" height="40" fill="#111"/><text x="23" y="43.500" font-family="Open Sans" font-weight="700" font-size="24" textLength="35" lengthAdjust="spacingAndGlyphs" fill="#fff">PC</text><path fill="#fff" d="M25 52.500h15v3H25z"/>`,
`<path fill="#3a2622" d="M16 16q12-4 17 5 5 9 3 22l-1 8 5 20q-16-2-22-22-4-14-2-33z"/><path fill="#3a2622" d="M42 18q8-8 16-6l8 6 1 9q-1 9-5 9 4 9 4 28l1 6-23 1q-10-5-7-19 1-16 8-25z"/><path fill="#fff" d="M40 21q6-11 16-10 8 1 9 5l-10 1q-7 5-10 13-7 12-6 34-4-6-4-14 2-16 8-24z"/><path fill="#2b1a17" d="M38 21q0-4 4-4l3 3-4 6z"/><path fill="#8c7562" d="M46 29q4-9 11-9l9 4v8l-8 4h-4q-4 8-6 12 3 6 2 12-8-4-8-14 0-10 4-17z"/><path fill="#211514" d="M57 16l8-1 1 5-6 1z"/><path fill="#fff" d="M58 32l7-2-3 6z"/>`,
`<ellipse cx="41" cy="68" rx="22" ry="3" fill="#0003"/><g fill="#ececec">${gear}<circle cx="41" cy="38.500" r="23"/></g><circle cx="41" cy="38.500" r="18" fill="#dadada" stroke="#bdbdbd"/><circle cx="41" cy="38.500" r="9" fill="#62615c"/><path stroke="#8e1217" stroke-width="11" stroke-linecap="round" d="M19 60l24-24"/><path stroke="#d83a38" stroke-width="8" stroke-linecap="round" d="M19 60l24-24"/><circle cx="19" cy="60" r="2" fill="#701"/><path fill="#e6e6e4" stroke="#8b8b88" d="M43 32l6-5q-3-8 3-12 3-2 6-1l-5 6 2 6 6 1 6-5q3 8-3 12-4 2-8 1l-6 5z"/>`,
`<path fill="#3c4140" d="M13 57h56v6q0 3-3 3H16q-3 0-3-3z"/><path fill="#d9dad8" stroke="#777" d="M21 28h40l8 29q0 2-2 2H15q-2 0-2-2z"/><path fill="#bcbdba" d="M23 30h36l6 25H17z"/><ellipse cx="41" cy="41" rx="18" ry="10.500" fill="#7ed321"/><path fill="#f57900" d="M41 41L23 41q1-7 11-9.500z"/><path fill="#eee" d="M41 41H23q1 8 17 10.500z"/><path fill="#d8262c" d="M41 41l10 9q-5 2-11 1.500z"/><ellipse cx="41" cy="41" rx="6" ry="3.500" fill="#ddd" stroke="#777" stroke-width=".7"/><path stroke="#f6f6f6" stroke-width="4" d="M19 50l7 1"/><path stroke="#bbb" stroke-width="3.500" stroke-dasharray="1.500 1.500" d="M43 61.500h18"/>`,
`<defs><linearGradient id="dc" x2="1" y2="1"><stop offset="0" stop-color="#8fa0e0"/><stop offset="1" stop-color="#4d6bc0"/></linearGradient></defs><path fill="url(#dc)" d="M21 15h40q5 0 5 5v50L54 61l1 2H21q-5 0-5-5V20q0-5 5-5z"/><path fill="#fff" d="M26 28q5-2 8-2l2 2h10l2-2q4 0 8 2 6 10 5 22-4 4-10 4l-2-4H33l-2 4q-6 0-10-4-1-12 5-22z"/><circle cx="35" cy="41" r="3.700" fill="#6d83cf"/><circle cx="47.500" cy="41" r="3.700" fill="#6d83cf"/>`,
key(10,10,'K','#000')+key(38,10,'L','#000')+key(20.5,41,'a','#0a8a16')+key(48.5,41,'V','#000'),
`<path fill="#4a83d8" d="M17 19h49l4 46q0 4-4 4H17q-4 0-4-4z"/><path fill="#8db8f5" d="M19 20h44l4 43H15z"/><path fill="#333" d="M21 23h39l2 39H19z"/><path fill="#fcfcfc" d="M22 42h38l1 19H20z"/><path fill="#dedede" d="M22 23h37l1 19H22z"/><text x="29" y="30.500" font-family="Liberation Sans" font-size="5.500" fill="#666">FR</text><text x="29" y="52" font-family="Liberation Sans" font-size="21.500" textLength="25" lengthAdjust="spacingAndGlyphs" fill="#444">27</text>`,
`<g stroke-linejoin="round"><path fill="#fff" stroke="#000" stroke-width="4.500" d="M17 13q10-3 17 0 7-3 14 0 8-4 17 0 7 5 3 18-3 10-8 16 5 2 9 1-3 7-12 7-1 14-6 16-8 2-9-6l-1-14q-10 5-13 1-7 3-12-9-9-24 1-30z"/><path fill="#356792" stroke="#fff" stroke-width="2" d="M17 13q10-3 17 0 7-3 14 0 8-4 17 0 7 5 3 18-3 10-8 16 5 2 9 1-3 7-12 7-1 14-6 16-8 2-9-6l-1-14q-10 5-13 1-7 3-12-9-9-24 1-30z"/><path fill="none" stroke="#fff" stroke-width="2" d="M34 13q-8 8-5 23 3 9-1 16M48 13q10 11 9 22 3 6 1 12M29 33q6-5 10 0 1 8-2 18M53 30q-2 8 5 16"/></g><circle cx="36" cy="31" r="1.200" fill="#fff"/><circle cx="53" cy="30" r="1.200" fill="#fff"/>`,
`<defs><linearGradient id="my" x2="0" y2="1"><stop offset="0" stop-color="#2b6797"/><stop offset="1" stop-color="#173f60"/></linearGradient></defs><rect x="10" y="10" width="62" height="62" rx="5" fill="url(#my)" stroke="#4b7ea6"/><path fill="none" stroke="#fff" stroke-width="1.700" stroke-linejoin="round" d="M18 20q8-4 16 2 9 6 13 18 2 9 7 14l9 5-7 1 8 9M18 20q0 6 4 10 4 6 3 12 1 6 4 9l2-7 5 8"/><circle cx="25" cy="25" r="1.200" fill="#fff"/><path stroke="#fff" stroke-width="4" stroke-linecap="round" d="M57 19l9 8"/><path fill="none" stroke="#fff" stroke-width="3" d="M52 17q1 5 6 4 3-2 1-7"/>`,
`<path fill="#0003" d="M13 66h54v4H13z"/><path fill="#f3f3ee" d="M17 20h46l4 46q0 1-1 1H14q-1 0-1-1z"/><path fill="#cfcfc8" d="M13 63h54v4H13z"/>${spir}${para}<path stroke="#a8641a" stroke-width="7" d="M38 55l29-35"/><path stroke="#f7a73c" stroke-width="5" d="M38 55l29-35"/><path stroke="#efb9b0" stroke-width="6" stroke-linecap="round" d="M68 18.500l1-1"/><path fill="#ecd3a1" d="M35 53l6 4-9 5z"/><path fill="#222" d="M33 59l2 1.500-4 2z"/><circle cx="41" cy="76.500" r="3.600" fill="#e95420"/>`
];
def('dock-item',`:host{display:block;width:82px;height:81px;flex:none}svg{display:block}`,e=>`<svg width="82" height="81" viewBox="0 0 82 81">${DOCK[+e.getAttribute('i')]}</svg>`);
def('app-grid',`:host{display:grid;grid-template-columns:repeat(3,8px);gap:8px;margin:21px 21px 0 auto;align-content:start}i{width:8px;height:8px;border-radius:50%;background:#eee}`,'<i></i>'.repeat(9));
def('app-dock',`:host{display:flex;height:81px;flex:none;box-shadow:inset 0 1px #4a4840;background:linear-gradient(112.2deg,#545041 334px,#64322e 335px) 0 0/590px 81px no-repeat #62615c}`,
DOCK.map((_,i)=>`<dock-item i="${i}"></dock-item>`).join('')+'<app-grid></app-grid>');

def('desktop-screen',`:host{display:flex;flex-direction:column;width:1920px;height:1080px;overflow:hidden}.web{display:flex;flex:1;min-height:0}.pg{width:1908px;flex:none}.b{display:flex;flex:1}`,
`<gnome-bar></gnome-bar><window-title></window-title><tab-strip></tab-strip><nav-toolbar></nav-toolbar><bookmarks-bar></bookmarks-bar><div class="web"><div class="c pg"><site-header></site-header><div class="b"><repo-sidebar></repo-sidebar><repo-page></repo-page></div></div><scroll-bar></scroll-bar></div><app-dock></app-dock>`);
</script>
</body>
</html>
